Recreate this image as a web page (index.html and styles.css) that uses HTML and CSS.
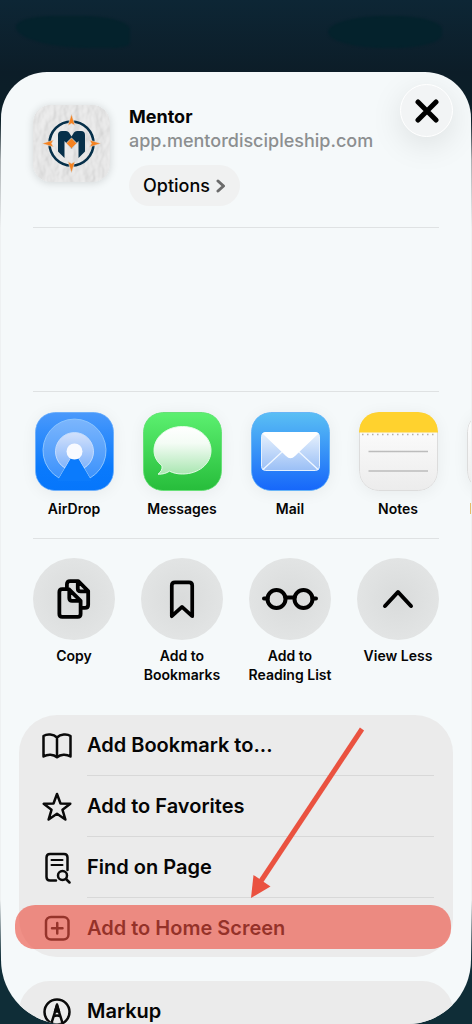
FILE: index.html
```html
<!DOCTYPE html>
<html lang="en">
<head>
  <meta charset="UTF-8">
  <meta name="viewport" content="width=device-width, initial-scale=1.0">
  <title>Mentor</title>
  <link rel="stylesheet" href="styles.css">
</head>
<body>

  <div class="backdrop">
    <span class="smudge smudge-left"></span>
    <span class="smudge smudge-right"></span>
  </div>

  <main class="sheet">
    <header class="site">
      <svg class="site-icon" viewBox="0 0 77 77" aria-hidden="true">
        <defs>
          <clipPath id="tile"><rect width="77" height="77" rx="18"/></clipPath>
          <filter id="paper" x="0" y="0" width="100%" height="100%">
            <feTurbulence type="fractalNoise" baseFrequency="0.09 0.06" numOctaves="3" seed="4"/>
            <feDiffuseLighting surfaceScale="1.3" diffuseConstant="1" lighting-color="#ededed">
              <feDistantLight azimuth="200" elevation="68"/>
            </feDiffuseLighting>
          </filter>
        </defs>
        <g clip-path="url(#tile)">
          <rect width="77" height="77" fill="#dedede"/>
          <rect width="77" height="77" filter="url(#paper)"/>
        </g>
        <circle cx="38.5" cy="38.5" r="22" fill="none" stroke="#06304a" stroke-width="2.6"/>
        <path fill="#f58220" stroke="#dedede" stroke-width="0.6" d="M38.500 9l3.500 11.500-3.500-2-3.500 2zM38.500 68l3.500-11.500-3.500 2-3.500-2zM9 38.500l11.500-3.500-2 3.500 2 3.500zM68 38.500l-11.500-3.500 2 3.500-2 3.500z"/>
        <path fill="#06304a" d="M25 46.500V30q0-4 4-4h4q2 0 3 1.500l2.500 4 2.500-4q1-1.500 3-1.500h4q4 0 4 4v16.500L45.500 53V36l-7 8-7-8v17z"/>
        <path fill="#f58220" stroke="#dedede" stroke-width="0.8" d="M38.500 33l5.300 5.300-5.300 5.300-5.300-5.300z"/>
      </svg>
      <div class="site-info">
        <h1>Mentor</h1>
        <p>app.mentordiscipleship.com</p>
        <button class="options" type="button">Options
          <svg width="10" height="14" viewBox="0 0 10 14" aria-hidden="true"><path d="M2 2l5.500 5L2 12"/></svg>
        </button>
      </div>
      <button class="close" type="button" aria-label="Close">
        <svg width="24" height="24" viewBox="0 0 24 24" aria-hidden="true"><path d="M3 3l18 18M21 3L3 21"/></svg>
      </button>
    </header>

    <section class="people" aria-label="People"></section>

    <ul class="apps">
      <li><a href="#airdrop">
        <svg class="tile" viewBox="0 0 79 79" aria-hidden="true">
          <defs>
            <linearGradient id="drop" x2="0" y2="1"><stop offset="0" stop-color="#4a99fb"/><stop offset=".7" stop-color="#0a7afc"/><stop offset="1" stop-color="#0676fb"/></linearGradient>
            <linearGradient id="ring" x2="0" y2="1"><stop offset="0" stop-color="#7cb6fc"/><stop offset="1" stop-color="#3c92fc"/></linearGradient>
            <linearGradient id="ring2" x2="0" y2="1"><stop offset="0" stop-color="#d3e1fb"/><stop offset="1" stop-color="#81b4fb"/></linearGradient>
          </defs>
          <rect x=".5" y=".5" width="78" height="78" rx="19" fill="url(#drop)" stroke="#6fb0fb"/>
          <path fill="url(#ring)" stroke="#8cc4fd" stroke-width="1" d="M39.500 39.500L24 66A31.500 31.500 0 1 1 55 66z"/>
          <path fill="url(#ring2)" stroke="#c3dcfd" stroke-width="1" d="M39.500 39.500L30 56A19 19 0 1 1 49 56z"/>
          <path fill="#0b7bfc" d="M36 46h7l13.500 23h-34z"/>
          <circle cx="39.500" cy="39.500" r="8" fill="#f8faff"/>
        </svg>
        AirDrop</a></li>
      <li><a href="#messages">
        <svg class="tile" viewBox="0 0 79 79" aria-hidden="true">
          <defs>
            <linearGradient id="green" x2="0" y2="1"><stop offset="0" stop-color="#5cf070"/><stop offset="1" stop-color="#27bd3b"/></linearGradient>
            <linearGradient id="bubble" x2="0" y2="1"><stop offset="0" stop-color="#ffffff"/><stop offset=".35" stop-color="#f4fcf5"/><stop offset="1" stop-color="#a9e6b1"/></linearGradient>
          </defs>
          <rect x=".5" y=".5" width="78" height="78" rx="19" fill="url(#green)" stroke="#68e078"/>
          <path fill="url(#bubble)" stroke="#e2fae5" stroke-width="1" d="M39.500 14.500C55.500 14.500 68 25 68 38.500S55.500 62 39.500 62c-5 0-9-.8-13-2.800-3 2-7 3.200-11.500 3 3-2.300 4.500-5 4-8.400C14 50 11 44.500 11 38.500 11 25 23.500 14.500 39.500 14.500z"/>
        </svg>
        Messages</a></li>
      <li><a href="#mail">
        <svg class="tile" viewBox="0 0 79 79" aria-hidden="true">
          <defs>
            <linearGradient id="blue" x2="0" y2="1"><stop offset="0" stop-color="#5abff4"/><stop offset="1" stop-color="#1667fa"/></linearGradient>
            <linearGradient id="letter" x2="0" y2="1"><stop offset="0" stop-color="#e8f2fd"/><stop offset="1" stop-color="#9abff6"/></linearGradient>
          </defs>
          <rect x=".5" y=".5" width="78" height="78" rx="19" fill="url(#blue)" stroke="#68b5f8"/>
          <rect x="10.500" y="20.500" width="58" height="38" rx="4" fill="url(#letter)" stroke="#e3f0fe"/>
          <path fill="none" stroke="#f0f7ff" stroke-width="1.300" d="M12 57.500l20-18.500M67 57.500L47 39"/>
          <path fill="#fff" d="M11.500 21.500q1-1.500 3-1.500h50q2 0 3 1.500L44 44q-4.500 4.500-9 0z"/>
        </svg>
        Mail</a></li>
      <li><a href="#notes">
        <svg class="tile" viewBox="0 0 79 79" aria-hidden="true">
          <defs>
            <linearGradient id="note" x2="0" y2="1"><stop offset="0" stop-color="#ffffff"/><stop offset="1" stop-color="#ececec"/></linearGradient>
          </defs>
          <rect x=".5" y=".5" width="78" height="78" rx="19" fill="url(#note)" stroke="#dcdcdc"/>
          <path fill="#ffd22e" d="M0 20.500V20Q0 0 20 0H59Q79 0 79 20v.5z"/>
          <path fill="none" stroke="#b3b0a6" stroke-width="1.500" stroke-dasharray="1.500 3.500" d="M3 22.500h74"/>
          <path fill="none" stroke="#bcbcbc" stroke-width="1.300" d="M9.500 39.500h59.500M9.500 59h59.500"/>
        </svg>
        Notes</a></li>
      <li><a href="#reminders">
        <svg class="tile" viewBox="0 0 79 79" aria-hidden="true">
          <rect x=".5" y=".5" width="78" height="78" rx="19" fill="url(#note)" stroke="#dcdcdc"/>
        </svg>
        Reminders</a></li>
    </ul>

    <div class="actions">
      <button type="button">
        <span class="circle"><svg width="34" height="40" viewBox="0 0 36 42" aria-hidden="true"><path d="M10.500 9V5.500q0-3.500 3.500-3.500h8.500L33 12.500V27q0 3.500-3.500 3.500H26M22 2.500V10q0 3 3 3h7.500M5.500 10.500h7L25 23v14q0 3-3 3H5.500q-3 0-3-3V13.500q0-3 3-3zM13 11v9q0 3 3 3h8.500"/></svg></span>
        Copy
      </button>
      <button type="button">
        <span class="circle"><svg width="26" height="39" viewBox="0 0 28 42" aria-hidden="true"><path d="M3 39V6q0-3.500 3.500-3.500h15Q25 2.500 25 6v33L14 29z"/></svg></span>
        Add to<br>Bookmarks
      </button>
      <button type="button">
        <span class="circle"><svg width="56" height="24" viewBox="0 0 56 24" aria-hidden="true"><circle cx="14.500" cy="12" r="9"/><circle cx="41.500" cy="12" r="9"/><path d="M23.500 10.500h9M2 11.500h3.500M50.500 11.500H54"/></svg></span>
        Add to<br>Reading List
      </button>
      <button type="button">
        <span class="circle"><svg width="32" height="20" viewBox="0 0 32 20" aria-hidden="true"><path d="M3 17L16 3l13 14"/></svg></span>
        View Less
      </button>
    </div>

    <div class="menu">
      <button type="button">
        <svg width="32" height="32" viewBox="0 0 32 32" aria-hidden="true"><path d="M16 7.500C12.500 4 6 3.500 2.500 6v20.500c4-2.500 10-2.500 13.500.8 3.500-3.300 9.500-3.300 13.500-.8V6C26 3.500 19.500 4 16 7.500zM16 7.500v19.500"/></svg>
        <span>Add Bookmark to...</span>
      </button>
      <button type="button">
        <svg width="32" height="32" viewBox="0 0 32 32" aria-hidden="true"><path d="M16 3l3.500 9.500 9.800.3-7.800 6 2.900 9.700L16 22.800l-8.400 5.700 2.900-9.700-7.800-6 9.800-.3z"/></svg>
        <span>Add to Favorites</span>
      </button>
      <button type="button">
        <svg width="32" height="32" viewBox="0 0 32 32" aria-hidden="true"><path d="M15 28.500H9Q5.500 28.500 5.500 25V5.500Q5.500 2 9 2h14q3.500 0 3.500 3.500V18"/><path class="thin" d="M10.500 8h11M10.500 13h11"/><circle cx="21.500" cy="23.500" r="4.500"/><path d="M25 27l3.500 3.500"/></svg>
        <span>Find on Page</span>
      </button>
      <button type="button" class="marked">
        <svg width="32" height="32" viewBox="0 0 32 32" aria-hidden="true"><rect x="5" y="5" width="22.500" height="22.500" rx="5"/><path d="M16.250 11v10.500M11 16.250h10.500"/></svg>
        <span>Add to Home Screen</span>
      </button>
      <svg class="arrow" width="116" height="172" viewBox="0 0 116 172" aria-hidden="true">
        <path fill="none" stroke="#ea5240" stroke-width="5" d="M113 2L12 154"/>
        <path fill="#ea5240" d="M2 171L4.500 148 21.500 159.500z"/>
      </svg>
    </div>

    <div class="menu">
      <button type="button">
        <svg width="32" height="32" viewBox="0 0 32 32" aria-hidden="true"><circle cx="16" cy="16" r="12.500"/><path d="M10.500 27L16 9.500 21.500 27M12.500 20.500q3.500-2 7 0"/><path class="solid" d="M16 8.500l2 7h-4z"/></svg>
        <span>Markup</span>
      </button>
    </div>
  </main>

</body>
</html>
```

FILE: styles.css
```css
* {
  box-sizing: border-box;
}

body {
  display: flex;
  flex-direction: column;
  height: 100vh;
  margin: 0;
  overflow: hidden;
  font-family: Inter, "Liberation Sans", sans-serif;
  font-weight: 600;
  color: #050505;
  background: linear-gradient(#0d2635 0, #0c1d28 72px, #0c2028 120px, #aab0b2 160px, #eef1f2 228px, #eef1f2 900px, #0f2d37 960px);
}

button {
  padding: 0;
  border: 0;
  background: none;
  font: inherit;
  color: inherit;
  cursor: pointer;
}

/* Dark strip of the page behind the sheet */
.backdrop {
  display: flex;
  flex: none;
  justify-content: space-between;
  height: 72px;
  padding: 16px 30px 0 16px;
}

.smudge {
  width: 114px;
  height: 32px;
  background: #04222c;
  filter: blur(1px);
}

.smudge-left {
  border-radius: 40% 50% 20% 80%;
}

.smudge-right {
  border-radius: 60% 50% 50% 60%;
}

.sheet {
  flex: 1;
  min-height: 0;
  margin: 0 1px;
  overflow: hidden;
  border-radius: 46px 46px 64px 64px;
  background: #f5f9fa;
}

.site {
  display: flex;
  height: 156px;
  margin: 0 32px;
  padding-top: 33px;
  border-bottom: 1px solid #dfe2e3;
}

.site-icon {
  flex: none;
  width: 77px;
  height: 77px;
  border-radius: 18px;
  box-shadow: 0 1px 8px rgba(0, 0, 0, 0.15);
}

.site-info {
  flex: 1;
  margin-left: 19px;
}

.site h1 {
  margin: 0;
  font-size: 18px;
  font-weight: 700;
  line-height: 24px;
}

.site p {
  margin: 0;
  font-size: 18px;
  font-weight: 500;
  line-height: 24px;
  color: #8c8f90;
}

.options {
  display: flex;
  align-items: center;
  gap: 6px;
  height: 41px;
  margin-top: 12px;
  padding: 0 14px;
  border-radius: 21px;
  background: #f0f1f1;
  font-size: 18px;
  font-weight: 500;
}

.options svg {
  fill: none;
  stroke: #6b6b6b;
  stroke-width: 3;
  stroke-linecap: round;
  stroke-linejoin: round;
}

.close {
  display: flex;
  flex: none;
  align-items: center;
  justify-content: center;
  width: 53px;
  height: 53px;
  margin: -21px -14px 0 0;
  border: 1px solid #fff;
  border-radius: 50%;
  background: #f2f4f5;
  box-shadow: 0 8px 32px rgba(0, 0, 0, 0.1);
}

.close svg {
  fill: none;
  stroke: #000;
  stroke-width: 5;
  stroke-linecap: round;
}

.people {
  height: 164px;
  margin: 0 32px;
  border-bottom: 1px solid #dfe2e3;
}

.apps {
  display: grid;
  grid-auto-flow: column;
  grid-auto-columns: 25%;
  height: 146px;
  margin: 0 19px;
  padding: 20px 0 0;
  list-style: none;
  font-size: 14px;
  line-height: 19px;
}

.apps a {
  display: flex;
  flex-direction: column;
  align-items: center;
  gap: 8px;
  color: inherit;
  text-decoration: none;
}

.tile {
  width: 79px;
  height: 79px;
  border-radius: 20px;
  box-shadow: 0 2px 16px rgba(0, 0, 0, 0.06);
}

.actions {
  display: grid;
  grid-template-columns: repeat(4, 1fr);
  align-items: start;
  margin: 0 19px 31px;
  padding-top: 20px;
  font-size: 14px;
  line-height: 19px;
  background: linear-gradient(#dfe2e3, #dfe2e3) center top / calc(100% - 26px) 1px no-repeat;
}

.actions button {
  display: block;
  text-align: center;
}

.circle {
  display: flex;
  align-items: center;
  justify-content: center;
  width: 82px;
  height: 82px;
  margin: 0 auto 6px;
  border-radius: 50%;
  background: radial-gradient(#d9dbdb, #e2e4e4 70%);
}

.circle svg {
  fill: none;
  stroke: #000;
  stroke-width: 4;
  stroke-linecap: round;
  stroke-linejoin: round;
}

.menu {
  position: relative;
  margin: 0 18px 24px;
  border-radius: 38px;
  background: #ebebeb;
  font-size: 20px;
}

.menu button {
  display: flex;
  align-items: center;
  gap: 14px;
  position: relative;
  width: 100%;
  height: 61px;
  padding: 0 19px 0 22px;
  text-align: left;
}

.menu button span {
  flex: 1;
  line-height: 60px;
}

.menu button:not(.marked) span {
  border-bottom: 1px solid #d8d8d8;
}

.menu .marked {
  height: 59px;
}

.menu button svg {
  flex: none;
  fill: none;
  stroke: #0a0a0a;
  stroke-width: 2.5;
  stroke-linecap: round;
  stroke-linejoin: round;
}

.menu .thin {
  stroke-width: 2;
}

.menu .solid {
  fill: #0a0a0a;
}

/* Red marker drawn over the row */
.marked::after {
  content: "";
  position: absolute;
  top: 7px;
  right: 2px;
  bottom: 8px;
  left: -4px;
  border-radius: 20px;
  background: rgba(237, 79, 64, 0.62);
}

.arrow {
  position: absolute;
  top: 12px;
  right: 88px;
  pointer-events: none;
}
```
